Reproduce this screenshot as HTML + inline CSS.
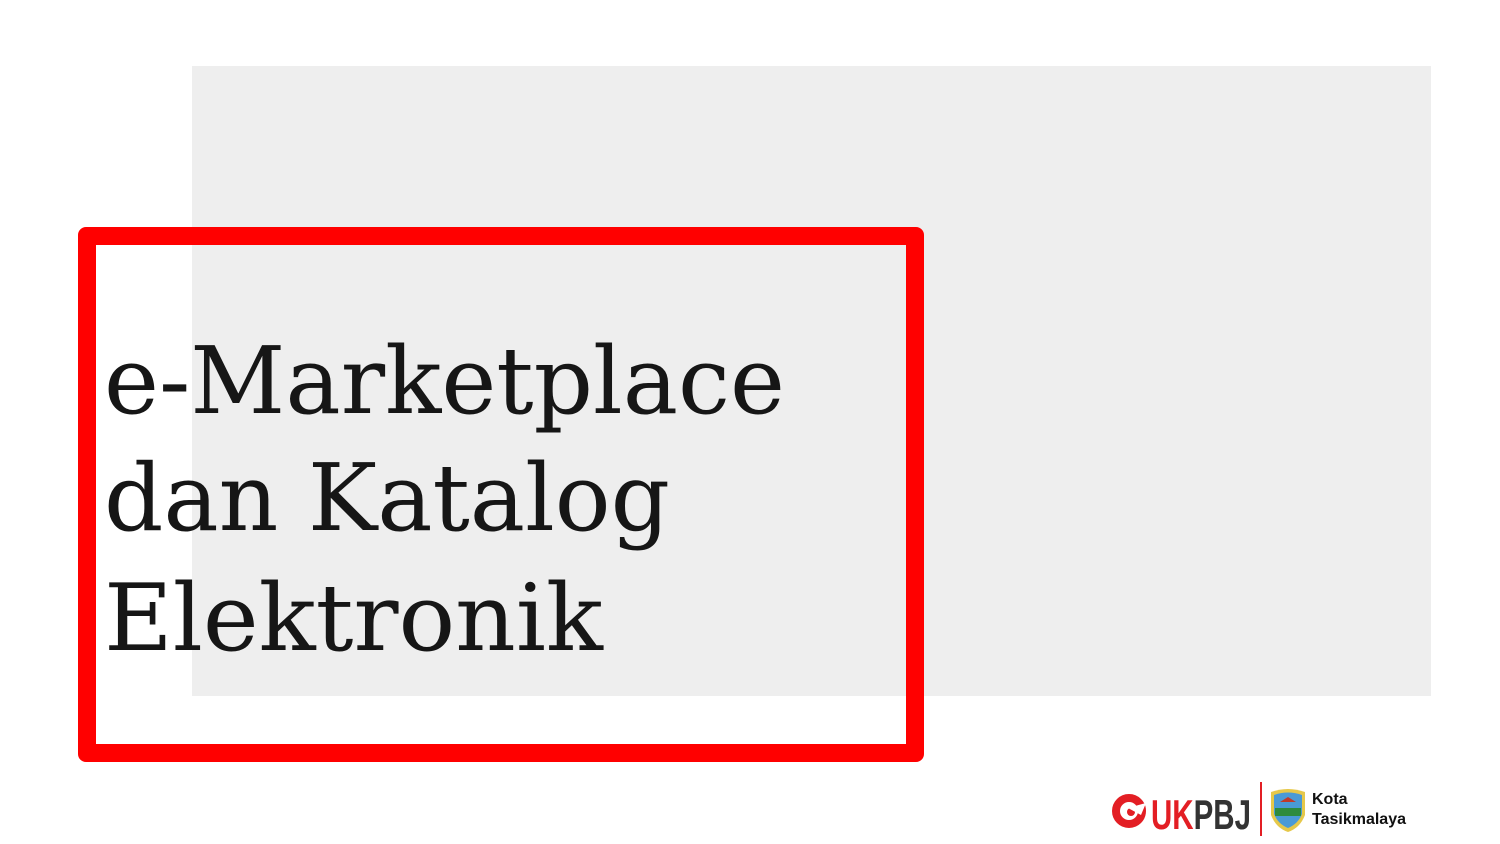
<!DOCTYPE html>
<html><head><meta charset="utf-8"><style>
html,body{margin:0;padding:0;background:#fff;}
body{width:1500px;height:844px;position:relative;overflow:hidden;font-family:"Liberation Sans",sans-serif;}
.gray{position:absolute;left:192px;top:66px;width:1239px;height:630px;background:#eeeeee;}
.box{position:absolute;left:78px;top:227px;width:810px;height:499px;border:18px solid #ff0000;border-radius:8px;}
svg.t{position:absolute;left:0;top:0;}
.kota{position:absolute;left:1312px;top:790px;font-size:16px;font-weight:bold;line-height:20px;color:#111;}
</style></head><body>
<div class="gray"></div>
<div class="box"></div>
<svg class="t" width="1500" height="844">
<g font-family="DejaVu Serif, serif" font-size="93" fill="#161616">
<text x="104" y="413" textLength="681" lengthAdjust="spacingAndGlyphs">e-Marketplace</text>
<text x="104" y="530" textLength="566" lengthAdjust="spacingAndGlyphs">dan Katalog</text>
<text x="104" y="650" textLength="499" lengthAdjust="spacingAndGlyphs">Elektronik</text>
</g>
<circle cx="1129" cy="811" r="13" fill="none" stroke="#e31e24" stroke-width="8"/>
<circle cx="1131" cy="812" r="4" fill="#e31e24"/>
<path d="M1128 808 L1146 803 L1141 815 Z" fill="#fff"/>
<text x="1151" y="829" font-family="Liberation Sans, sans-serif" font-weight="bold" font-size="42" textLength="100" lengthAdjust="spacingAndGlyphs"><tspan fill="#e31e24">UK</tspan><tspan fill="#333">PBJ</tspan></text>
<rect x="1260" y="782" width="2" height="54" fill="#e31e24"/>
<path d="M1271 792 Q1288 786 1305 792 L1305 815 Q1300 828 1288 832 Q1276 828 1271 815 Z" fill="#e6c84a"/>
<path d="M1274 795 Q1288 790 1302 795 L1302 814 Q1298 824 1288 828 Q1278 824 1274 814 Z" fill="#4a9ad6"/>
<rect x="1275" y="808" width="26" height="8" fill="#2e8b3e"/>
<path d="M1280 802 L1288 797 L1296 802 Z" fill="#c0392b"/>
</svg>
<div class="kota">Kota<br>Tasikmalaya</div>
</body></html>
